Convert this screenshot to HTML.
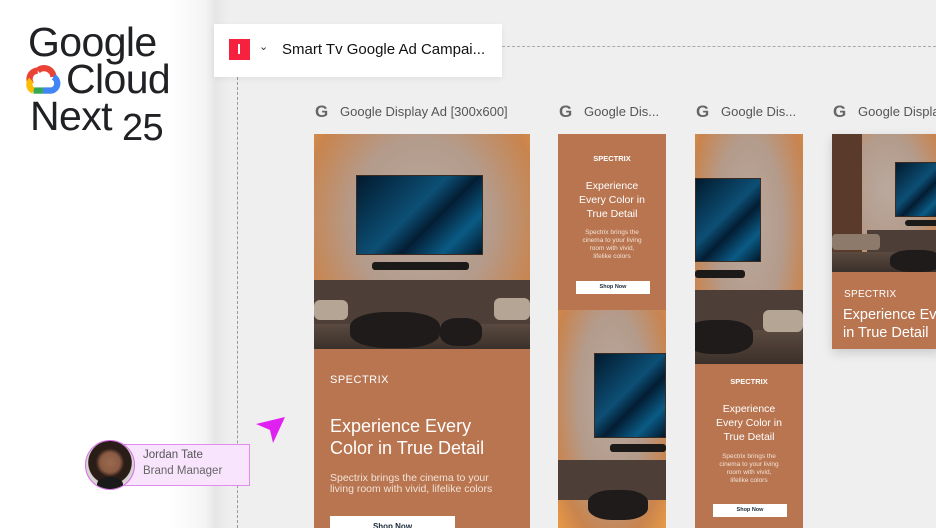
<!DOCTYPE html>
<html><head><meta charset="utf-8"><style>
*{margin:0;padding:0;box-sizing:border-box}
body{width:936px;height:528px;overflow:hidden;background:#efeff0;font-family:"Liberation Sans",sans-serif;position:relative}
.abs{position:absolute}
.left{left:0;top:0;width:230px;height:528px;background:linear-gradient(90deg,#fff 0,#fff 170px,#f4f4f4 205px,#e6e6e6 215px,#efeff0 230px)}
.logo{font-size:41px;color:#202124;line-height:36px;letter-spacing:-0.6px}
.lbl{font-size:13px;color:#555;top:104px;white-space:nowrap}
.g{font-weight:bold;font-size:17px;color:#666;top:102px}
.ad{background:#b87550;overflow:hidden;color:#fff;text-align:center}
.scene{position:absolute;overflow:hidden;background:radial-gradient(ellipse at 50% 40%,#b9a99e 0,#b49b8b 45%,#c9844e 78%,#e89a45 100%)}
.tv{position:absolute;background:linear-gradient(135deg,#021a2e 0,#0d4f75 45%,#031d33 60%,#0a5b85 80%,#02172a 100%);border:1px solid #3a2a20}
.bar{position:absolute;background:#1c1a19;border-radius:3px}
.cab{position:absolute;background:#4d3f37}
.floor{position:absolute;background:linear-gradient(#5a4a40,#3b302a)}
.tab{position:absolute;background:#1e1b1a;border-radius:40%}
.btn{position:absolute;background:#fff;color:#1a2a3a;font-weight:bold}
</style></head><body>
<div class="abs left"></div>
<div class="abs logo" style="left:28px;top:24px">Google</div>
<div class="abs logo" style="left:66px;top:61px">Cloud</div>
<svg class="abs" style="left:23px;top:63px" width="42" height="32" viewBox="0 0 40 30">
<path d="M8 20a8 8 0 0 1 6-13" stroke="#ea4335" stroke-width="6" fill="none"/>
<path d="M14 7a9 9 0 0 1 15 6" stroke="#ea4335" stroke-width="6" fill="none"/>
<path d="M29 13a7 7 0 0 1 -2 13h-8" stroke="#4285f4" stroke-width="6" fill="none"/>
<path d="M19 26h-9" stroke="#34a853" stroke-width="6" fill="none"/>
<path d="M10 26a6 6 0 0 1 -2-10" stroke="#fbbc04" stroke-width="6" fill="none"/>
</svg>
<div class="abs logo" style="left:30px;top:98px">Next</div>
<div class="abs logo" style="left:122px;top:110px;font-size:38px">25</div>

<div class="abs" style="left:237px;top:77px;height:451px;border-left:1px dashed #999"></div>
<div class="abs" style="left:502px;top:46px;width:434px;border-top:1px dashed #aaa"></div>
<div class="abs" style="left:214px;top:24px;width:288px;height:53px;background:#fff;box-shadow:0 2px 6px rgba(0,0,0,.06)"></div>
<div class="abs" style="left:229px;top:39px;width:21px;height:21px;background:#f5213f"><div style="position:absolute;left:9px;top:5px;width:2px;height:10px;background:#fff"></div></div>
<div class="abs" style="left:259px;top:40px;font-size:11px;color:#333">&#8964;</div>
<div class="abs" style="left:282px;top:41px;font-size:15px;color:#111">Smart Tv Google Ad Campai...</div>

<div class="abs g" style="left:315px">G</div><div class="abs lbl" style="left:340px">Google Display Ad [300x600]</div>
<div class="abs g" style="left:559px">G</div><div class="abs lbl" style="left:584px">Google Dis...</div>
<div class="abs g" style="left:696px">G</div><div class="abs lbl" style="left:721px">Google Dis...</div>
<div class="abs g" style="left:833px">G</div><div class="abs lbl" style="left:858px">Google Displa</div>

<!-- Ad 1 -->
<div class="abs ad" style="left:314px;top:134px;width:216px;height:394px">
 <div class="scene" style="left:0;top:0;width:216px;height:215px">
  <div class="tv" style="left:42px;top:41px;width:127px;height:80px"></div>
  <div class="bar" style="left:58px;top:128px;width:97px;height:8px"></div>
  <div class="cab" style="left:0;top:146px;width:216px;height:45px"></div>
  <div class="floor" style="left:0;top:190px;width:216px;height:25px"></div>
  <div class="tab" style="left:36px;top:178px;width:90px;height:36px"></div>
  <div class="tab" style="left:126px;top:184px;width:42px;height:28px"></div>
  <div class="abs" style="left:0;top:166px;width:34px;height:20px;background:#b5a594;border-radius:6px"></div>
  <div class="abs" style="left:180px;top:164px;width:36px;height:22px;background:#b5a594;border-radius:6px"></div>
 </div>
 <div class="abs" style="left:16px;top:240px;font-size:11px;letter-spacing:.5px">SPECTRIX</div>
 <div class="abs" style="left:16px;top:281px;font-size:18px;line-height:22px;text-align:left">Experience Every<br>Color in True Detail</div>
 <div class="abs" style="left:16px;top:339px;font-size:10.5px;line-height:11px;text-align:left;color:#f2e2d6">Spectrix brings the cinema to your<br>living room with vivid, lifelike colors</div>
 <div class="btn" style="left:16px;top:382px;width:125px;height:20px;font-size:8px;padding-top:6px">Shop Now</div>
</div>

<!-- Ad 2 -->
<div class="abs ad" style="left:558px;top:134px;width:108px;height:394px">
 <div class="abs" style="left:0;top:20px;width:108px;font-size:7.5px;font-weight:bold">SPECTRIX</div>
 <div class="abs" style="left:0;top:45px;width:108px;font-size:10.5px;line-height:14px">Experience<br>Every Color in<br>True Detail</div>
 <div class="abs" style="left:0;top:95px;width:108px;font-size:6.5px;line-height:8px;color:#f2e2d6">Spectrix brings the<br>cinema to your living<br>room with vivid,<br>lifelike colors</div>
 <div class="btn" style="left:18px;top:147px;width:74px;height:13px;font-size:5.5px;padding-top:3px">Shop Now</div>
 <div class="scene" style="left:0;top:176px;width:108px;height:218px">
  <div class="tv" style="left:36px;top:43px;width:72px;height:85px"></div>
  <div class="bar" style="left:52px;top:134px;width:56px;height:8px"></div>
  <div class="cab" style="left:0;top:150px;width:108px;height:40px"></div>
  <div class="tab" style="left:30px;top:180px;width:60px;height:30px"></div>
 </div>
</div>

<!-- Ad 3 -->
<div class="abs ad" style="left:695px;top:134px;width:108px;height:394px">
 <div class="scene" style="left:0;top:0;width:108px;height:230px">
  <div class="tv" style="left:0;top:44px;width:66px;height:84px"></div>
  <div class="bar" style="left:0;top:136px;width:50px;height:8px"></div>
  <div class="cab" style="left:0;top:156px;width:108px;height:40px"></div>
  <div class="floor" style="left:0;top:196px;width:108px;height:34px"></div>
  <div class="abs" style="left:68px;top:176px;width:40px;height:22px;background:#b5a594;border-radius:6px"></div>
  <div class="tab" style="left:-10px;top:186px;width:68px;height:34px"></div>
 </div>
 <div class="abs" style="left:0;top:243px;width:108px;font-size:7.5px;font-weight:bold">SPECTRIX</div>
 <div class="abs" style="left:0;top:268px;width:108px;font-size:10.5px;line-height:14px">Experience<br>Every Color in<br>True Detail</div>
 <div class="abs" style="left:0;top:319px;width:108px;font-size:6.5px;line-height:8px;color:#f2e2d6">Spectrix brings the<br>cinema to your living<br>room with vivid,<br>lifelike colors</div>
 <div class="btn" style="left:18px;top:370px;width:74px;height:13px;font-size:5.5px;padding-top:3px">Shop Now</div>
</div>

<!-- Ad 4 -->
<div class="abs ad" style="left:832px;top:134px;width:110px;height:215px;box-shadow:0 4px 10px rgba(0,0,0,.15)">
 <div class="scene" style="left:0;top:0;width:110px;height:138px">
  <div class="abs" style="left:0;top:0;width:30px;height:138px;background:#5a3a2a"></div>
  <div class="tv" style="left:63px;top:28px;width:47px;height:55px"></div>
  <div class="bar" style="left:73px;top:86px;width:37px;height:6px"></div>
  <div class="cab" style="left:35px;top:96px;width:75px;height:22px"></div>
  <div class="floor" style="left:0;top:118px;width:110px;height:20px"></div>
  <div class="abs" style="left:0;top:100px;width:48px;height:16px;background:#8e7a6a;border-radius:4px"></div>
  <div class="tab" style="left:58px;top:116px;width:52px;height:22px"></div>
 </div>
 <div class="abs" style="left:12px;top:155px;font-size:10px;letter-spacing:.3px">SPECTRIX</div>
 <div class="abs" style="left:11px;top:172px;font-size:14.5px;line-height:18px;text-align:left;white-space:nowrap">Experience Every<br>in True Detail</div>
</div>

<!-- cursor -->
<svg class="abs" style="left:254px;top:415px" width="34" height="30" viewBox="0 0 34 30"><path d="M2 9 L31 2 L19 28 L16 15 Z" fill="#e020f0"/></svg>
<!-- user -->
<div class="abs" style="left:124px;top:444px;width:126px;height:42px;background:#f9e4fd;border:1px solid #e38cf0"></div>
<div class="abs" style="left:143px;top:449px;font-size:11.5px;color:#555">Jordan Tate</div>
<div class="abs" style="left:143px;top:465px;font-size:11.5px;color:#666">Brand Manager</div>
<div class="abs" style="left:85px;top:440px;width:50px;height:50px;border-radius:50%;border:1.5px solid #d86ae8;background:radial-gradient(circle at 50% 45%,#9a6a50 0,#8a5a42 28%,#2a1d18 40%,#2a1d18 60%,#d8d4d2 62%);overflow:hidden">
 <div style="position:absolute;left:11px;top:36px;width:26px;height:14px;background:#1a1a1a;border-radius:50% 50% 0 0"></div>
</div>
</body></html>
